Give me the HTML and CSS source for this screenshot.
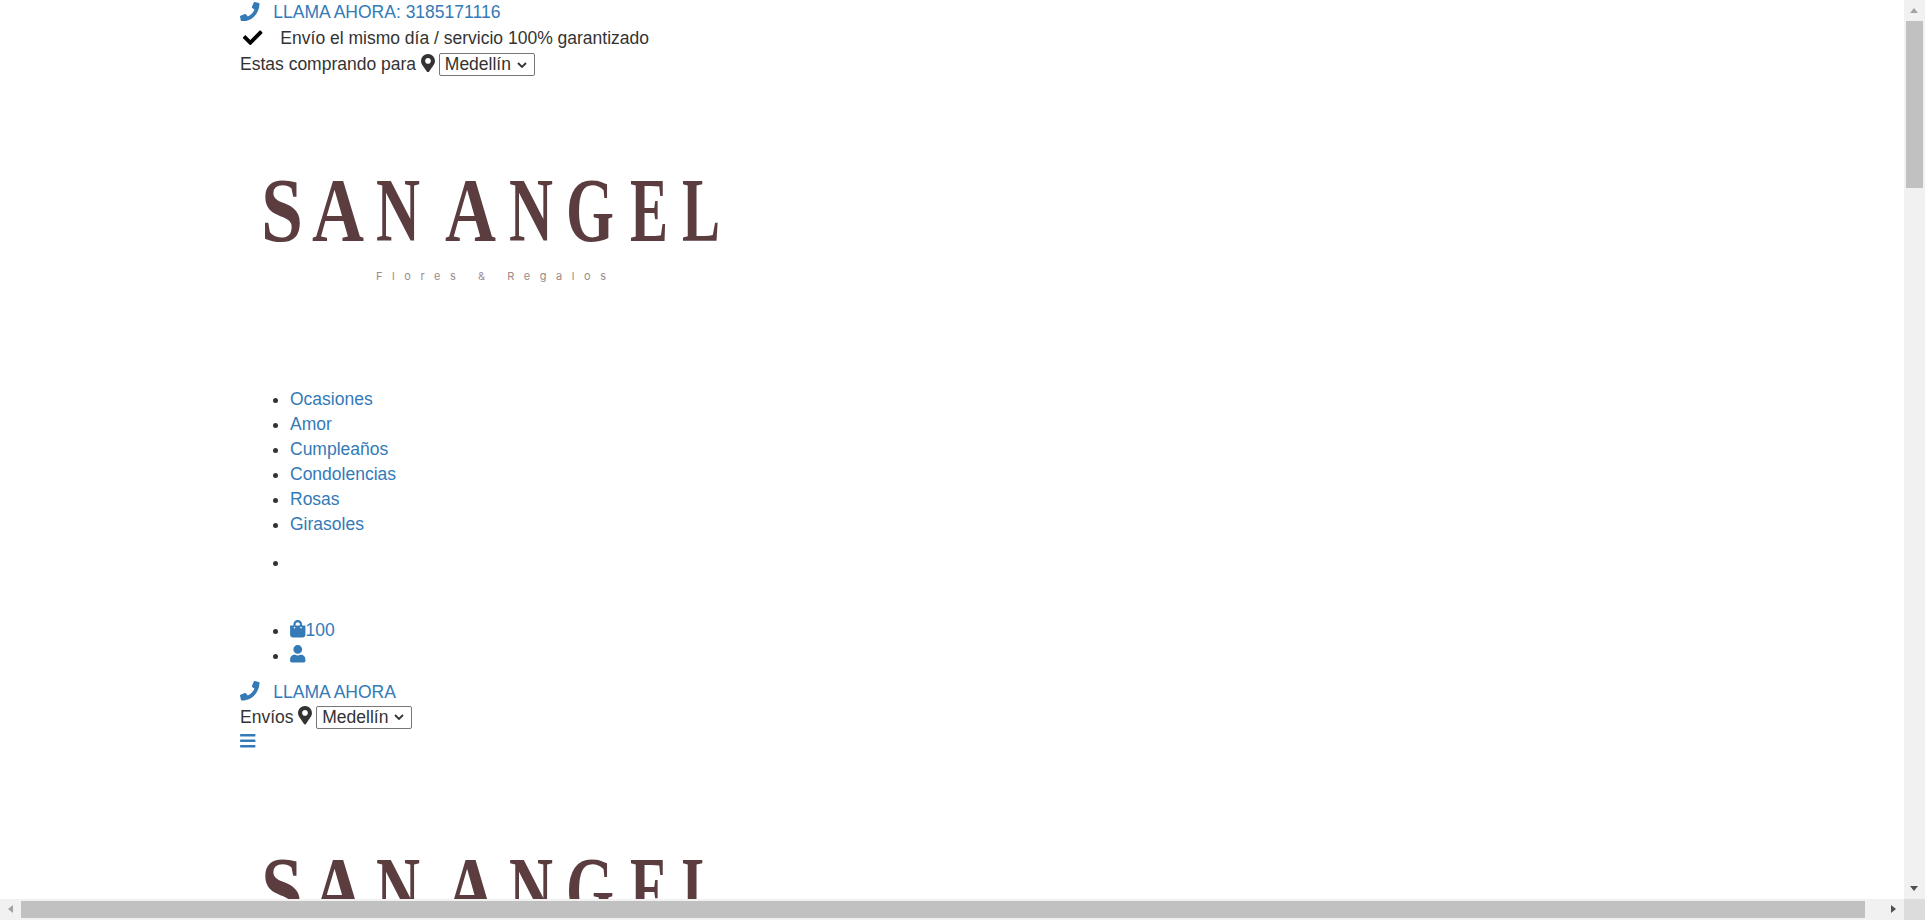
FILE: index.html
```html
<!DOCTYPE html>
<html lang="es">
<head>
    <meta charset="UTF-8">
    <meta name="viewport" content="width=device-width, initial-scale=1.0">
    <title>San Angel Flores y Regalos</title>
    <link rel="stylesheet" href="styles.css">
</head>
<body>
    <div class="page">
        <main class="content">
            <!-- barra superior -->
            <div class="row">
                <a href="#" class="link">
                    <svg class="icon icon-phone" viewBox="0 0 512 512"><path d="M493.4 24.6l-104-24c-11.3-2.6-22.9 3.3-27.5 13.9l-48 112c-4.2 9.8-1.4 21.3 6.9 28l60.6 49.6c-36 76.7-98.9 140.5-177.2 177.2l-49.6-60.6c-6.8-8.3-18.2-11.1-28-6.9l-112 48C3.9 366.5-2 378.1.6 389.4l24 104C27.1 504.2 36.7 512 48 512c256.1 0 464-207.5 464-464 0-11.2-7.7-20.9-18.6-23.4z"/></svg>
                    LLAMA AHORA: 3185171116
                </a>
            </div>
            <div class="row row-tall">
                <svg class="icon icon-check" viewBox="0 0 512 512"><path d="M173.898 439.404l-166.4-166.4c-9.997-9.997-9.997-26.206 0-36.204l36.203-36.204c9.997-10 26.207-10 36.204 0L192 312.69 432.095 72.596c9.997-9.997 26.207-9.997 36.204 0l36.203 36.204c9.997 9.997 9.997 26.206 0 36.204l-294.4 294.401c-9.998 9.997-26.207 9.997-36.204-.001z"/></svg>
                Envío el mismo día / servicio 100% garantizado
            </div>
            <div class="row row-tall">
                Estas comprando para
                <svg class="icon icon-marker" viewBox="0 0 384 512"><path d="M172.268 501.67C26.97 291.031 0 268.413 0 192 0 85.961 85.961 0 192 0s192 85.961 192 192c0 76.413-26.97 99.031-172.268 309.67-9.535 13.774-29.93 13.773-39.464 0zM192 272c44.183 0 80-35.817 80-80s-35.817-80-80-80-80 35.817-80 80 35.817 80 80 80z"/></svg>
                <select class="city"><option>Medellín</option></select>
            </div>

            <svg class="logo" viewBox="0 0 500 300">
                <text class="logo-name" y="163.5"><tspan x="21" textLength="42" lengthAdjust="spacingAndGlyphs">S</tspan><tspan x="72" textLength="52" lengthAdjust="spacingAndGlyphs">A</tspan><tspan x="136" textLength="44" lengthAdjust="spacingAndGlyphs">N</tspan> <tspan x="205" textLength="51" lengthAdjust="spacingAndGlyphs">A</tspan><tspan x="269" textLength="44" lengthAdjust="spacingAndGlyphs">N</tspan><tspan x="326" textLength="48" lengthAdjust="spacingAndGlyphs">G</tspan><tspan x="390" textLength="38" lengthAdjust="spacingAndGlyphs">E</tspan><tspan x="442" textLength="38" lengthAdjust="spacingAndGlyphs">L</tspan></text>
                <text class="logo-tag" x="136" y="203" textLength="230">Flores &amp; Regalos</text>
            </svg>

            <ul class="menu">
                <li><a href="#" class="link">Ocasiones</a></li>
                <li><a href="#" class="link">Amor</a></li>
                <li><a href="#" class="link">Cumpleaños</a></li>
                <li><a href="#" class="link">Condolencias</a></li>
                <li><a href="#" class="link">Rosas</a></li>
                <li><a href="#" class="link">Girasoles</a></li>
            </ul>

            <ul class="menu menu-search">
                <li></li>
            </ul>

            <ul class="menu menu-user">
                <li>
                    <a href="#" class="link"><svg class="icon icon-bag" viewBox="0 0 448 512"><path d="M352 160v-32C352 57.42 294.579 0 224 0 153.42 0 96 57.42 96 128v32H0v272c0 44.183 35.817 80 80 80h288c44.183 0 80-35.817 80-80V160h-96zm-192-32c0-35.29 28.71-64 64-64s64 28.71 64 64v32H160v-32zm160 120c-13.255 0-24-10.745-24-24s10.745-24 24-24 24 10.745 24 24-10.745 24-24 24zm-192 0c-13.255 0-24-10.745-24-24s10.745-24 24-24 24 10.745 24 24-10.745 24-24 24z"/></svg>100</a>
                </li>
                <li>
                    <a href="#" class="link"><svg class="icon icon-user" viewBox="0 0 448 512"><path d="M224 256c70.7 0 128-57.3 128-128S294.7 0 224 0 96 57.3 96 128s57.3 128 128 128zm89.6 32h-16.7c-22.2 10.2-46.9 16-72.9 16s-50.6-5.8-72.9-16h-16.7C60.2 288 0 348.2 0 422.4V464c0 26.5 21.5 48 48 48h352c26.5 0 48-21.5 48-48v-41.6c0-74.2-60.2-134.4-134.4-134.4z"/></svg></a>
                </li>
            </ul>

            <!-- version movil -->
            <div class="row">
                <a href="#" class="link">
                    <svg class="icon icon-phone" viewBox="0 0 512 512"><path d="M493.4 24.6l-104-24c-11.3-2.6-22.9 3.3-27.5 13.9l-48 112c-4.2 9.8-1.4 21.3 6.9 28l60.6 49.6c-36 76.7-98.9 140.5-177.2 177.2l-49.6-60.6c-6.8-8.3-18.2-11.1-28-6.9l-112 48C3.9 366.5-2 378.1.6 389.4l24 104C27.1 504.2 36.7 512 48 512c256.1 0 464-207.5 464-464 0-11.2-7.7-20.9-18.6-23.4z"/></svg>
                    LLAMA AHORA
                </a>
            </div>
            <div class="row">
                Envíos
                <svg class="icon icon-marker" viewBox="0 0 384 512"><path d="M172.268 501.67C26.97 291.031 0 268.413 0 192 0 85.961 85.961 0 192 0s192 85.961 192 192c0 76.413-26.97 99.031-172.268 309.67-9.535 13.774-29.93 13.773-39.464 0zM192 272c44.183 0 80-35.817 80-80s-35.817-80-80-80-80 35.817-80 80 35.817 80 80 80z"/></svg>
                <select class="city"><option>Medellín</option></select>
            </div>
            <div class="row">
                <a href="#" class="link"><svg class="icon icon-bars" viewBox="0 0 448 512"><path d="M16 132h416c8.837 0 16-7.163 16-16V76c0-8.837-7.163-16-16-16H16C7.163 60 0 67.163 0 76v40c0 8.837 7.163 16 16 16zm0 160h416c8.837 0 16-7.163 16-16v-40c0-8.837-7.163-16-16-16H16c-8.837 0-16 7.163-16 16v40c0 8.837 7.163 16 16 16zm0 160h416c8.837 0 16-7.163 16-16v-40c0-8.837-7.163-16-16-16H16c-8.837 0-16 7.163-16 16v40c0 8.837 7.163 16 16 16z"/></svg></a>
            </div>

            <svg class="logo logo-second" viewBox="0 0 500 300">
                <text class="logo-name" y="163.5"><tspan x="21" textLength="42" lengthAdjust="spacingAndGlyphs">S</tspan><tspan x="72" textLength="52" lengthAdjust="spacingAndGlyphs">A</tspan><tspan x="136" textLength="44" lengthAdjust="spacingAndGlyphs">N</tspan> <tspan x="205" textLength="51" lengthAdjust="spacingAndGlyphs">A</tspan><tspan x="269" textLength="44" lengthAdjust="spacingAndGlyphs">N</tspan><tspan x="326" textLength="48" lengthAdjust="spacingAndGlyphs">G</tspan><tspan x="390" textLength="38" lengthAdjust="spacingAndGlyphs">E</tspan><tspan x="442" textLength="38" lengthAdjust="spacingAndGlyphs">L</tspan></text>
                <text class="logo-tag" x="136" y="203" textLength="230">Flores &amp; Regalos</text>
            </svg>
        </main>

        <div class="scroll-y">
            <span class="arrow arrow-up"></span>
            <span class="thumb thumb-y"></span>
            <span class="arrow arrow-down"></span>
        </div>
        <div class="scroll-x">
            <span class="arrow arrow-left"></span>
            <span class="thumb thumb-x"></span>
            <span class="arrow arrow-right"></span>
        </div>
        <div class="scroll-corner"></div>
    </div>
</body>
</html>
```

FILE: styles.css
```css
* {
    box-sizing: border-box;
}
html, body {
    margin: 0;
    height: 100%;
    overflow: hidden;
}
body {
    font-family: "Liberation Sans", Arial, sans-serif;
    font-size: 17.5px;
    line-height: 25px;
    color: #333;
    background-color: #fff;
}
.page {
    display: grid;
    grid-template-columns: 1fr 21px;
    grid-template-rows: 1fr 21px;
    height: 100%;
}
.content {
    overflow: hidden;
    padding-left: 240px;
}
.link {
    color: #337ab7;
    text-decoration: none;
}
.row {
    height: 25px;
    white-space: nowrap;
}
.row-tall {
    height: 26px;
    padding-top: 1px;
}
.icon {
    display: inline-block;
    fill: currentColor;
    vertical-align: -2px;
}
.icon-phone {
    width: 19.5px;
    height: 19.5px;
    margin-right: 9px;
    vertical-align: -3px;
}
.icon-check {
    width: 19.5px;
    height: 19.5px;
    margin: 0 13px 0 3px;
    color: #000;
    vertical-align: -3px;
}
.icon-marker {
    width: 14px;
    height: 18.5px;
    margin-right: -1px;
    vertical-align: -2px;
}
.icon-bag,
.icon-user {
    width: 15.5px;
    height: 17.5px;
}
.icon-bars {
    width: 15.5px;
    height: 17.5px;
}
.city {
    appearance: none;
    font-family: inherit;
    font-size: 17.5px;
    line-height: 21px;
    color: #333;
    height: 23px;
    width: 96px;
    padding: 0 0 0 5px;
    border: 1px solid #767676;
    border-radius: 2px;
    background: #fff url("data:image/svg+xml,%3Csvg xmlns='http://www.w3.org/2000/svg' width='10' height='6'%3E%3Cpath d='M1 1l4 4 4-4' fill='none' stroke='%23333' stroke-width='1.8'/%3E%3C/svg%3E") no-repeat right 7px center;
}
.logo {
    display: block;
    width: 500px;
    height: 300px;
}
.logo-second {
    height: 302px;
}
.logo-name {
    font-family: "Liberation Serif", serif;
    font-weight: bold;
    font-size: 90px;
    fill: #5b3d3f;
}
.logo-tag {
    font-family: Inter, sans-serif;
    font-size: 11px;
    fill: #9a8a8a;
}
.menu {
    margin: 10px 0 0;
    padding-left: 50px;
}
.menu-search {
    height: 68px;
    margin-top: 12.5px;
}
.menu-user {
    margin-top: 0;
    margin-bottom: 12px;
}
.scroll-y,
.scroll-x {
    display: flex;
    align-items: center;
    background-color: #f1f1f1;
    position: relative;
}
.scroll-y {
    flex-direction: column;
    padding: 21px 2px 0;
    justify-content: flex-start;
}
.scroll-x {
    padding: 2px 0;
}
.scroll-corner {
    background-color: #dcdcdc;
}
.thumb {
    display: block;
    background-color: #c1c1c1;
}
.thumb-y {
    width: 17px;
    height: 167px;
}
.thumb-x {
    height: 17px;
    width: 1844px;
    margin-left: 21px;
}
.arrow {
    position: absolute;
    width: 0;
    height: 0;
    border-style: solid;
    border-color: transparent;
}
.arrow-up {
    top: 8px;
    left: 6px;
    border-width: 0 4.5px 5px;
    border-bottom-color: #a3a3a3;
}
.arrow-down {
    bottom: 8px;
    left: 6px;
    border-width: 5px 4.5px 0;
    border-top-color: #505050;
}
.arrow-left {
    left: 8px;
    top: 6px;
    border-width: 4.5px 5px 4.5px 0;
    border-right-color: #a3a3a3;
}
.arrow-right {
    right: 8px;
    top: 6px;
    border-width: 4.5px 0 4.5px 5px;
    border-left-color: #505050;
}
```
